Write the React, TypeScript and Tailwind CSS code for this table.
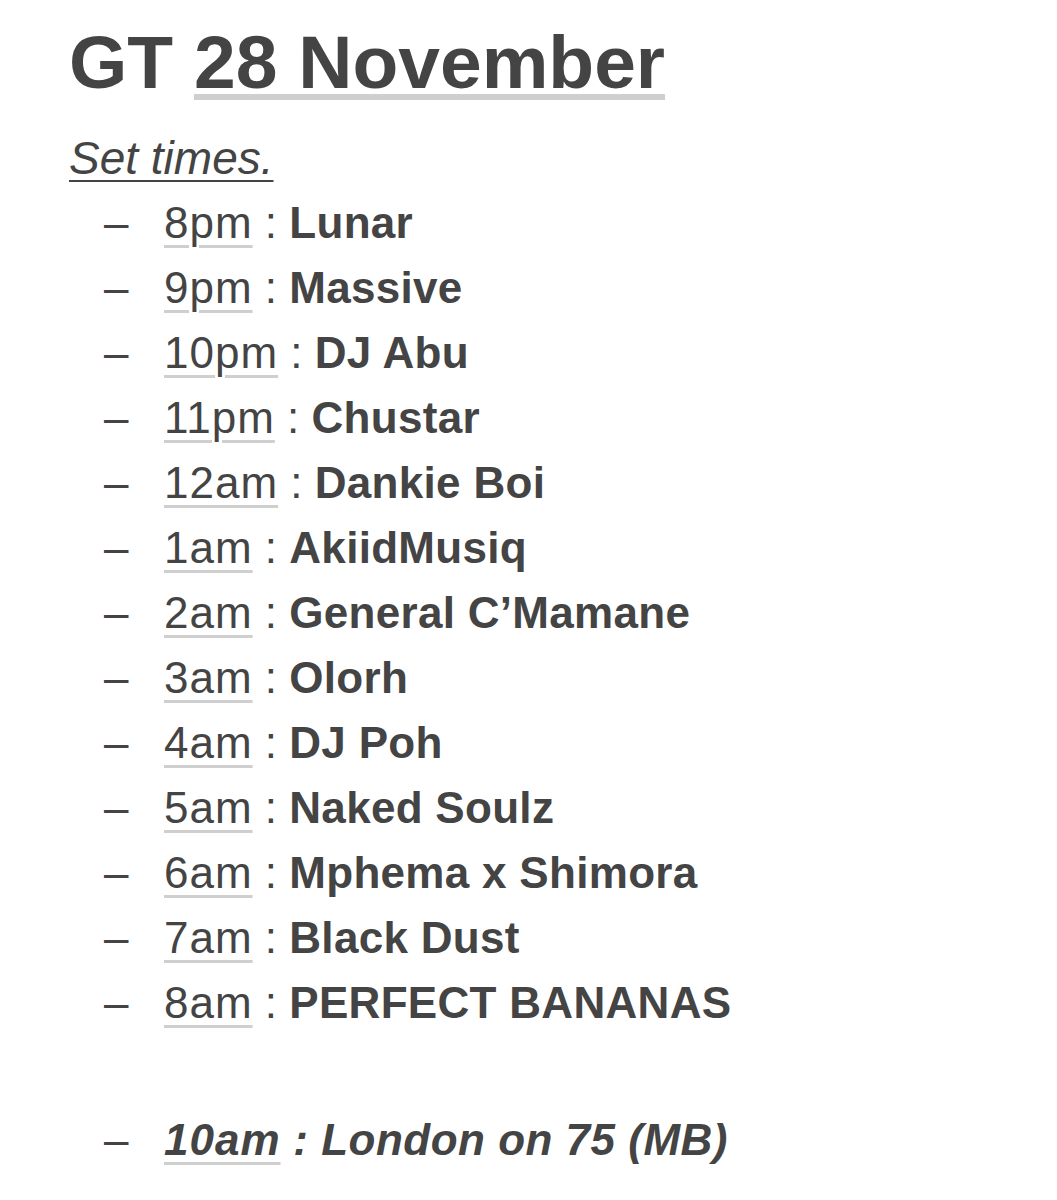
const rows: { time: string; name: string }[] = [
  { time: "8pm", name: "Lunar" },
  { time: "9pm", name: "Massive" },
  { time: "10pm", name: "DJ Abu" },
  { time: "11pm", name: "Chustar" },
  { time: "12am", name: "Dankie Boi" },
  { time: "1am", name: "AkiidMusiq" },
  { time: "2am", name: "General C\u2019Mamane" },
  { time: "3am", name: "Olorh" },
  { time: "4am", name: "DJ Poh" },
  { time: "5am", name: "Naked Soulz" },
  { time: "6am", name: "Mphema x Shimora" },
  { time: "7am", name: "Black Dust" },
  { time: "8am", name: "PERFECT BANANAS" },
];

function Time({ children }: { children: string }) {
  return (
    <span className="tracking-[1px] underline decoration-[#cfcfcf] decoration-[2.5px] underline-offset-[7px]">
      {children}
    </span>
  );
}

export default function App() {
  return (
    <div className="w-[1057px] h-[1200px] bg-white text-[#444444] font-['Liberation_Sans',Arial,sans-serif] pl-[69px] pt-[25px] overflow-hidden">
      <h1 className="text-[75px] leading-[75px] font-bold">
        GT{" "}
        <span className="underline decoration-[#cfcfcf] decoration-[6px] underline-offset-[6px]">
          28 November
        </span>
      </h1>

      <p className="mt-[26px] text-[46px] leading-[64px] italic underline decoration-2 underline-offset-[6px] w-fit">
        Set times.
      </p>

      <ul className="pl-[35px]">
        {rows.map((r) => (
          <li key={r.time} className="flex text-[44px] leading-[65px]">
            <span className="w-[60px] shrink-0">&ndash;</span>
            <span className="whitespace-pre">
              <Time>{r.time}</Time>
              {" : "}
              <span className="font-bold tracking-[0.3px]">{r.name}</span>
            </span>
          </li>
        ))}
        <li className="h-[72px]" />
        <li className="flex text-[44px] leading-[65px]">
          <span className="w-[60px] shrink-0">&ndash;</span>
          <span className="whitespace-pre italic font-bold tracking-[0.5px]">
            <Time>10am</Time>
            {" : London on 75 (MB)"}
          </span>
        </li>
      </ul>
    </div>
  );
}
